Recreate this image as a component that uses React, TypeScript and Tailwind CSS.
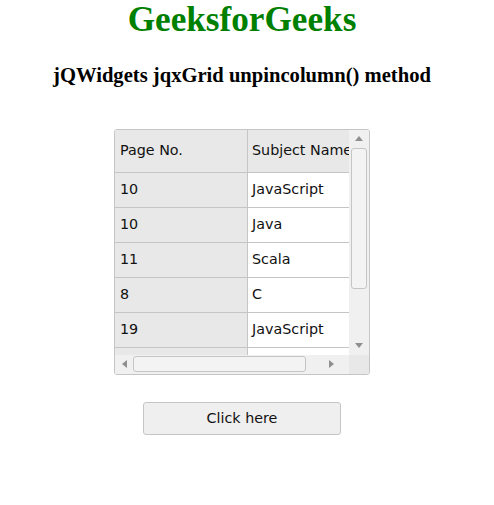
import React from "react";

const rows: [string, string][] = [
  ["10", "JavaScript"],
  ["10", "Java"],
  ["11", "Scala"],
  ["8", "C"],
  ["19", "JavaScript"],
];

function Arrow({ dir }: { dir: "up" | "down" | "left" | "right" }) {
  const pts =
    dir === "up"
      ? "0,5 4,0 8,5"
      : dir === "down"
      ? "0,0 8,0 4,5"
      : dir === "left"
      ? "5,0 5,8 0,4"
      : "0,0 0,8 5,4";
  const w = dir === "up" || dir === "down" ? 8 : 5;
  const h = dir === "up" || dir === "down" ? 5 : 8;
  return (
    <svg width={w} height={h} viewBox={`0 0 ${w} ${h}`}>
      <polygon points={pts} fill="#8f8f8f" />
    </svg>
  );
}

export default function App() {
  return (
    <div className="w-[484px] bg-white text-center">
      <h1
        className="m-0 text-[35.2px] font-bold leading-[1.15] text-[#008000]"
        style={{ fontFamily: '"Liberation Serif", serif' }}
      >
        GeeksforGeeks
      </h1>
      <h3
        className="mt-[23.6px] text-[20.6px] font-bold leading-[1.15] text-black"
        style={{ fontFamily: '"Liberation Serif", serif' }}
      >
        jQWidgets jqxGrid unpincolumn() method
      </h3>
      <div
        className="mx-auto mt-[41px] flex h-[246px] w-[256px] flex-col overflow-hidden rounded-[3px] border border-[#c5c5c5] text-left text-[14.3px] text-[#111]"
        style={{ fontFamily: '"DejaVu Sans", Verdana, sans-serif' }}
      >
        <div className="flex h-[225px]">
          <div className="flex w-[234px] flex-col overflow-hidden">
            <div className="flex h-[43px] shrink-0 border-b border-[#c5c5c5] bg-[#e8e8e8]">
              <div className="flex w-[133px] shrink-0 items-center border-r border-[#c5c5c5] pl-[5px]">
                Page No.
              </div>
              <div className="flex w-[140px] shrink-0 items-center whitespace-nowrap pl-[4px]">
                Subject Name
              </div>
            </div>
            {rows.map(([a, b], i) => (
              <div key={i} className="flex h-[35px] shrink-0 border-b border-[#c5c5c5]">
                <div className="flex w-[133px] shrink-0 items-center border-r border-[#c5c5c5] bg-[#e8e8e8] pl-[5px]">
                  {a}
                </div>
                <div className="flex w-[140px] shrink-0 items-center bg-white pl-[4px]">
                  {b}
                </div>
              </div>
            ))}
            <div className="flex h-[35px] shrink-0">
              <div className="w-[133px] shrink-0 border-r border-[#c5c5c5] bg-[#e8e8e8]" />
              <div className="w-[140px] shrink-0 bg-white" />
            </div>
          </div>
          <div className="flex w-[20px] flex-col bg-[#f0f0f0]">
            <div className="flex h-[18px] items-center justify-center">
              <Arrow dir="up" />
            </div>
            <div className="mx-auto h-[141px] w-[16px] rounded-[3px] border border-[#c5c5c5] bg-[#f3f3f3]" />
            <div className="flex flex-1 items-end justify-center pb-[7px]">
              <Arrow dir="down" />
            </div>
          </div>
        </div>
        <div className="flex h-[19px]">
          <div className="flex w-[234px] items-center bg-[#f0f0f0]">
            <div className="flex w-[18px] justify-center">
              <Arrow dir="left" />
            </div>
            <div className="h-[16px] w-[173px] rounded-[3px] border border-[#c5c5c5] bg-[#f3f3f3]" />
            <div className="flex flex-1 justify-center pl-[8px]">
              <Arrow dir="right" />
            </div>
          </div>
          <div className="flex-1 bg-[#e8e8e8]" />
        </div>
      </div>
      <button
        className="mx-auto mt-[27px] block h-[33px] w-[198px] rounded-[3px] border border-[#c5c5c5] bg-[#efefef] text-[14.3px] text-[#111]"
        style={{ fontFamily: '"DejaVu Sans", Verdana, sans-serif' }}
      >
        Click here
      </button>
    </div>
  );
}
